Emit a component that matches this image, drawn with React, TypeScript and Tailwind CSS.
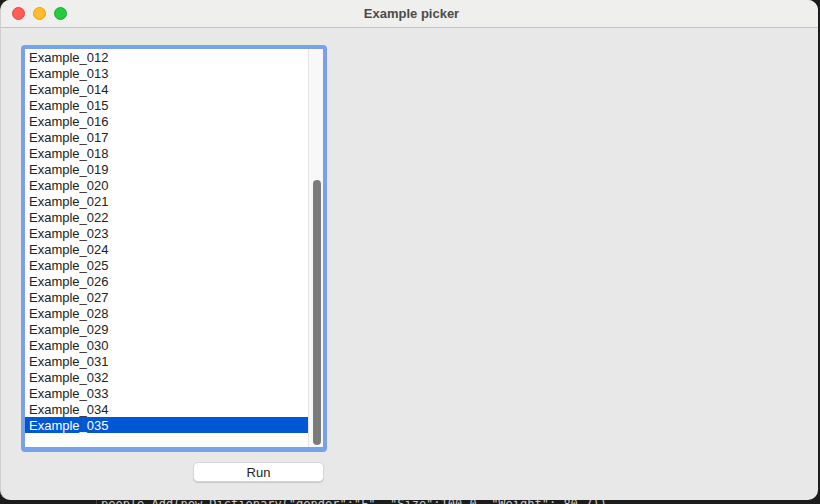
import React from "react";

const items = Array.from({ length: 24 }, (_, i) => `Example_${String(12 + i).padStart(3, "0")}`);

export default function App() {
  return (
    <div
      className="w-[820px] h-[504px] bg-[#1c1c1c] overflow-hidden relative"
      style={{ fontFamily: '"Liberation Sans", Arial, sans-serif' }}
    >
      <div className="w-[818px] h-[500px] rounded-[10px] overflow-hidden bg-[#e8e8e8] flex flex-col border-l border-[#d0d0d0]">
        <div className="h-[28px] shrink-0 bg-[#efefed] border-b border-[#c4c4c4] flex items-center relative">
          <div className="flex items-center gap-[8px] pl-[11px]">
            <div className="w-[13px] h-[13px] rounded-full bg-[#fe5f57] border border-[#e24640]" />
            <div className="w-[13px] h-[13px] rounded-full bg-[#febc2e] border border-[#e1a116]" />
            <div className="w-[13px] h-[13px] rounded-full bg-[#28c840] border border-[#14ae29]" />
          </div>
          <div className="absolute left-0 right-0 top-0 h-full flex items-center justify-center pointer-events-none">
            <span className="text-[13px] font-bold text-[#4b4b4b] ml-[4px]">Example picker</span>
          </div>
        </div>
        <div className="flex-1 flex flex-col pl-[20px] pt-[17px]">
          <div className="w-[306px] h-[407px] rounded-[4px] bg-[#78a1e8] p-[4px] pt-[4px] pb-[5px] flex">
            <div className="flex-1 bg-white flex">
              <div className="flex-1 flex flex-col">
                {items.map((t, i) => (
                  <div
                    key={t}
                    className={`h-[16px] leading-[18px] text-[13px] pl-[4px] ${
                      i === items.length - 1 ? "bg-[#0058d1] text-white" : "text-[#222]"
                    }`}
                  >
                    {t}
                  </div>
                ))}
              </div>
              <div className="w-[15px] bg-[#f8f8f8] border-l border-[#e4e4e4] flex flex-col pt-[131px] pb-[2px] items-center">
                <div className="w-[8px] h-[265px] rounded-full bg-[#7b7b7b] ml-[1px]" />
              </div>
            </div>
          </div>
          <div className="flex pl-[172px] pt-[10px]">
            <button className="block w-[131px] h-[20px] bg-white rounded-[5px] border border-[#d6d6d6] shadow-[0_1px_1px_rgba(0,0,0,0.15)] text-[13px] text-[#222] leading-[17px]">
              Run
            </button>
          </div>
        </div>
      </div>
      <div className="h-[4px] overflow-hidden relative">
        <div className="absolute left-[96px] top-0 w-[1px] h-[4px] bg-[#444]" />
        <div className="absolute left-[515px] top-0 w-[1px] h-[4px] bg-[#444]" />
        <div
          className="absolute left-[101px] top-[-2px] text-[12px] leading-[12px] text-[#c8c8c8] whitespace-pre"
          style={{ fontFamily: '"DejaVu Sans Mono", monospace' }}
        >
          people.Add(new Dictionary("gender":"F", "Size":100.0, "Weight": 80.7))
        </div>
      </div>
    </div>
  );
}
